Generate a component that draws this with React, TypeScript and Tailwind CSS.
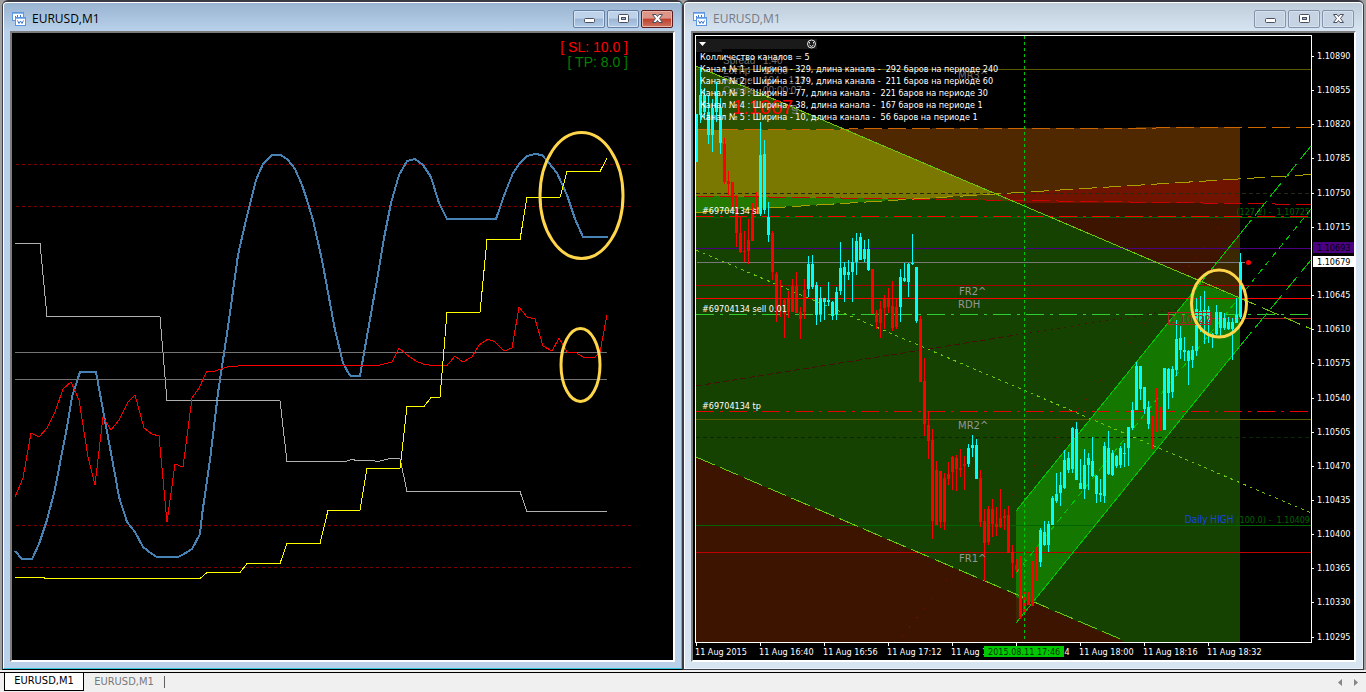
import { ReactElement, ReactNode } from 'react'
import clsx from 'clsx'

type Candle = [color: 'c' | 'r', high: number, top: number, bottom: number, low: number]

// One candle every 4px, starting at x = 696
const candles: Candle[] = [
  ['c', 114, 114, 162, 162], ['c', 68, 95, 115, 123], ['c', 88, 95, 112, 118], ['c', 95, 112, 135, 144],
  ['c', 99, 108, 135, 152], ['c', 82, 92, 112, 122], ['c', 98, 108, 143, 154], ['r', 138, 144, 182, 184],
  ['r', 171, 181, 184, 195], ['r', 182, 182, 202, 210], ['r', 195, 197, 233, 247], ['r', 216, 233, 252, 253],
  ['r', 231, 251, 252, 262], ['r', 219, 240, 251, 264], ['r', 203, 213, 241, 241], ['r', 192, 208, 214, 214],
  ['c', 122, 155, 214, 216], ['c', 140, 154, 210, 214], ['c', 202, 217, 235, 242], ['r', 231, 233, 272, 280],
  ['r', 272, 274, 309, 322], ['r', 280, 307, 311, 317], ['r', 299, 300, 314, 338], ['r', 291, 298, 312, 318],
  ['r', 279, 286, 312, 312], ['r', 272, 286, 313, 313], ['r', 307, 312, 319, 339], ['r', 279, 290, 312, 319],
  ['c', 256, 264, 289, 297], ['c', 255, 264, 287, 289], ['c', 282, 285, 315, 325], ['c', 287, 298, 314, 322],
  ['c', 298, 298, 302, 320], ['c', 282, 300, 302, 306], ['c', 301, 302, 316, 320], ['c', 287, 292, 314, 320],
  ['c', 242, 268, 291, 295], ['c', 262, 267, 275, 302], ['c', 260, 272, 275, 280], ['c', 238, 262, 272, 302],
  ['c', 233, 241, 262, 275], ['c', 233, 237, 260, 260], ['c', 240, 249, 259, 262], ['c', 239, 249, 270, 271],
  ['r', 269, 269, 314, 314], ['r', 310, 313, 322, 329], ['r', 301, 309, 323, 338], ['r', 295, 298, 308, 329],
  ['r', 288, 298, 307, 313], ['r', 281, 306, 328, 331], ['r', 298, 307, 327, 329], ['c', 269, 277, 307, 322],
  ['c', 263, 278, 281, 282], ['c', 263, 264, 282, 297], ['c', 234, 263, 264, 265], ['c', 267, 267, 321, 323],
  ['r', 316, 319, 382, 382], ['r', 358, 381, 424, 436], ['r', 411, 425, 441, 459], ['r', 429, 440, 521, 539],
  ['r', 461, 470, 525, 525], ['r', 471, 471, 522, 528], ['r', 473, 478, 522, 530], ['r', 462, 474, 479, 485],
  ['r', 456, 457, 472, 490], ['r', 455, 458, 469, 491], ['r', 449, 468, 470, 477], ['r', 456, 464, 466, 490],
  ['c', 444, 448, 464, 467], ['c', 435, 445, 448, 457], ['c', 439, 445, 479, 479], ['r', 470, 478, 522, 527],
  ['r', 509, 521, 543, 581], ['r', 506, 509, 542, 545], ['r', 499, 509, 524, 537], ['r', 507, 524, 527, 536],
  ['r', 489, 518, 527, 528], ['r', 509, 516, 518, 530], ['r', 506, 515, 553, 553], ['r', 545, 552, 563, 578],
  ['r', 559, 565, 570, 572], ['r', 556, 566, 617, 619], ['r', 592, 597, 613, 615], ['r', 592, 596, 605, 605],
  ['r', 561, 565, 606, 606], ['r', 547, 559, 565, 581], ['c', 528, 530, 562, 567], ['c', 521, 532, 545, 546],
  ['c', 521, 524, 545, 552], ['c', 496, 498, 525, 525], ['c', 473, 494, 501, 503], ['c', 472, 485, 493, 506],
  ['c', 450, 460, 488, 489], ['c', 452, 458, 470, 473], ['c', 427, 428, 469, 473], ['c', 422, 429, 480, 480],
  ['c', 459, 483, 489, 489], ['c', 449, 465, 489, 499], ['c', 453, 458, 465, 490], ['c', 437, 461, 476, 477],
  ['c', 475, 476, 494, 503], ['c', 479, 493, 495, 502], ['c', 442, 446, 496, 503], ['c', 431, 448, 474, 475],
  ['c', 450, 453, 475, 476], ['c', 455, 456, 466, 468], ['c', 446, 448, 465, 468], ['c', 443, 453, 454, 467],
  ['c', 427, 427, 448, 466], ['c', 402, 410, 428, 430], ['c', 362, 366, 410, 410], ['c', 366, 366, 389, 400],
  ['c', 387, 387, 409, 414], ['c', 401, 407, 424, 429], ['r', 416, 424, 433, 449], ['r', 388, 418, 432, 432],
  ['r', 407, 418, 430, 431], ['c', 368, 368, 430, 430], ['c', 368, 369, 393, 409], ['c', 366, 369, 392, 398],
  ['c', 320, 339, 370, 376], ['c', 326, 338, 350, 359], ['c', 337, 350, 352, 361], ['c', 350, 351, 361, 385],
  ['c', 346, 350, 360, 368], ['c', 298, 309, 351, 356], ['c', 296, 311, 322, 332], ['c', 291, 310, 316, 344],
  ['c', 306, 310, 320, 343], ['c', 333, 334, 336, 348], ['c', 305, 312, 334, 335], ['c', 312, 312, 328, 338],
  ['c', 313, 318, 328, 330], ['c', 317, 322, 329, 330], ['c', 318, 322, 329, 360], ['c', 298, 315, 323, 323],
  ['c', 253, 262, 317, 319],
]

const prices: [string, number][] = [
  ['1.10890', 56], ['1.10855', 90], ['1.10820', 124], ['1.10785', 158], ['1.10750', 193], ['1.10715', 227],
  ['1.10645', 295], ['1.10610', 329], ['1.10575', 363], ['1.10540', 398], ['1.10505', 432], ['1.10470', 466],
  ['1.10435', 500], ['1.10400', 534], ['1.10365', 568], ['1.10330', 602], ['1.10295', 637],
]

const dates = [
  '11 Aug 2015', '11 Aug 16:40', '11 Aug 16:56', '11 Aug 17:12', '11 Aug 17:28',
  '11 Aug 17:44', '11 Aug 18:00', '11 Aug 18:16', '11 Aug 18:32',
]

const channels = [
  'Колличество каналов = 5',
  'Канал № 1 : Ширина - 329, длина канала -  292 баров на периоде 240',
  'Канал № 2 : Ширина - 179, длина канала -  211 баров на периоде 60',
  'Канал № 3 : Ширина - 77, длина канала -  221 баров на периоде 30',
  'Канал № 4 : Ширина - 38, длина канала -  167 баров на периоде 1',
  'Канал № 5 : Ширина - 10, длина канала -  56 баров на периоде 1',
]

// y, color, dash pattern
const levels: [number, string, string?][] = [
  [69, '#5a5a00'],
  [193, '#282814', '4 3'],
  [216, '#ff0000', '18 6 3 6'],
  [217, '#006400'],
  [248, '#4b0082'],
  [285, '#aa0000'],
  [298, '#ff0000'],
  [314, '#32cd32', '18 6 3 6'],
  [411, '#e60000', '18 6 3 6'],
  [419, '#5a5a00'],
  [437, '#0a2800', '4 3'],
  [525, '#006400'],
  [552, '#be0000'],
]

const blueLine =
  '15,551 22,559 32,559 39,544 47,520 55,489 60,463 67,427 72,397 80,372 96,372 103,410 116,480 119,497 127,522 135,532 143,547 152,554 157,557 178,557 184,554 192,549 200,534 202,515 210,460 218,393 228,327 238,255 246,220 251,200 256,180 263,164 272,155 281,155 288,160 295,169 302,185 307,200 313,220 322,260 335,330 343,363 349,374 351,376 360,376 364,353 377,280 384,238 391,203 399,175 407,161 415,159 423,165 431,177 439,203 447,219 496,219 505,193 513,173 520,163 527,156 535,154 542,155 548,162 557,173 567,195 575,219 583,237 608,237'

const redLine =
  '15,497 23,478 31,433 39,437 47,428 55,412 63,389 71,382 79,400 88,457 95,485 103,417 111,430 119,420 128,402 135,395 144,428 152,434 159,436 167,522 175,464 183,467 192,398 199,388 207,371 215,371 227,367 243,365.5 378,365.5 392,362 399,348 407,355 416,361 423,364 432,365.5 447,365.5 455,356 463,362 472,357 479,345 488,339 495,342 504,351 512,348 519,307 527,317 535,319 543,346 552,351 559,338 567,352 576,352.5 583,357 595,357 600,352 607,315'

const yellowLine =
  '15,577.5 44,577.5 44,578.5 200,578.5 207,572.5 240,572.5 247,563.5 280,563.5 287,543.5 320,543.5 328,510.5 360,510.5 367,468.5 400,468.5 407,406.5 424,406.5 431,397.5 440,397.5 447,312.5 480,312.5 487,239.5 520,239.5 527,197.5 560,197.5 567,171.5 600,171.5 607,158'

const grayLine =
  '15,243.5 40,243.5 47,316.5 160,316.5 167,400.5 280,400.5 287,461.5 345,461.5 352,459.5 357,460.5 372,460.5 378,461.5 390,458.5 400,458.5 407,491.5 520,491.5 527,511.5 607,511.5'

const chartFont = "font-['DejaVu_Sans_Condensed','DejaVu_Sans',sans-serif]"

const ChartIcon = (): ReactElement => (
  <svg width="14" height="14" viewBox="0 0 14 14" shapeRendering="crispEdges" aria-hidden="true">
    <rect x="0.5" y="0.5" width="11" height="8" fill="#fff" stroke="#5c96e0" />
    <path d="M1 1.5H11" stroke="#8ab6ee" />
    <path d="M3.5 4V6M5.5 3V5M6.5 5V6M8.5 3V6" stroke="#3c78d0" />
    <rect x="3.5" y="5.5" width="10" height="8" fill="#fff" stroke="#5c96e0" />
    <path d="M4 6.5H13" stroke="#8ab6ee" />
    <path d="M5.5 8.5L7 11.5L8.5 9L10 11.5L11.5 8.5" fill="none" stroke="#3c78d0" shapeRendering="auto" />
  </svg>
)

const glyphs: Record<string, ReactNode> = {
  Minimize: <rect x="2.5" y="5.5" width="10" height="4" rx="1" />,
  Maximize: (
    <>
      <rect x="2.5" y="1.5" width="10" height="8" rx="1" />
      <rect x="5.5" y="4.5" width="4" height="2" fill="#9fb4cf" />
    </>
  ),
  Close: <path d="M2.5 1.5H6L7.5 3.5L9 1.5H12.5L9.5 5.5L12.5 9.5H9L7.5 7.5L6 9.5H2.5L5.5 5.5Z" />,
}

interface WindowProps {
  active?: boolean
  children: ReactNode
}

const ChartWindow = ({ active = false, children }: WindowProps): ReactElement => (
  <section
    className={clsx(
      'min-w-0 flex-1 rounded-t-md border border-t-2 border-[#3c3c46] border-t-[#3a3a44]',
      active ? 'bg-[#b9d1ea] border-b-black' : 'bg-[#d7e4f2]'
    )}
  >
    <div
      className={clsx(
        'rounded-t border-l border-t border-white border-r border-b px-1.5 pb-1.5',
        active
          ? 'border-r-[#35c5dc] border-b-[#35c5dc] bg-[linear-gradient(#99b4d1,#b9d1ea_28px)]'
          : 'border-r-[#e8f0f8] border-b-[#e8f0f8] bg-[linear-gradient(#bfcddb,#d7e4f2_28px)]'
      )}
    >
      <header className="flex h-7 items-center gap-1 pl-0.5 pr-0.5 pt-1">
        <ChartIcon />
        <h2
          className={clsx(
            "flex-1 pl-0.5 font-['Open_Sans','Noto_Sans',sans-serif] text-xs",
            active ? 'text-black' : 'text-[#747b84]'
          )}
        >
          EURUSD,M1
        </h2>
        <div className="flex gap-0.5">
          {['Minimize', 'Maximize', 'Close'].map((name) => (
            <button
              key={name}
              aria-label={name}
              className={clsx(
                'flex h-[18px] w-8 items-center justify-center rounded-xs border',
                active && name === 'Close' && 'border-[#5a1c20] bg-[linear-gradient(#dd9588_45%,#bd3f2c_50%,#cf7460)] shadow-[inset_0_0_0_1px_#e8b4a8]',
                active && name !== 'Close' && 'border-[#6580a3] bg-[linear-gradient(#bed2ea_45%,#9ab4d2_50%,#b4cce8)] shadow-[inset_0_0_0_1px_#d4e3f4]',
                !active && 'border-[#8493ab] bg-[#c6d3e2] shadow-[inset_0_0_0_1px_#d6e1ee]'
              )}
            >
              <svg width="14" height="12" viewBox="0 0 14 12" fill="#fff" stroke="#4a4f60" aria-hidden="true">
                {glyphs[name]}
              </svg>
            </button>
          ))}
        </div>
      </header>
      <div className="border-2 border-b-white border-l-[#7c7c7c] border-r-white border-t-[#7c7c7c] bg-black">{children}</div>
    </div>
  </section>
)

const IndicatorChart = (): ReactElement => (
  <svg viewBox="12 33 661 627" className="block h-auto w-full" role="img" aria-label="Indicator chart">
    <g className="font-['Liberation_Sans',Arial,sans-serif] text-[14px]" textAnchor="end">
      <text x="628" y="52" fill="#ff0000">[ SL: 10.0 ]</text>
      <text x="628" y="67" fill="#008000">[ TP: 8.0 ]</text>
    </g>
    <g fill="none" shapeRendering="crispEdges">
      {[164.5, 206.5, 525.5, 567.5].map((y) => (
        <path key={y} d={`M16 ${y}H631`} stroke="#800000" strokeDasharray="3 3" />
      ))}
      <polyline points={blueLine} stroke="#4682b4" strokeWidth="2" />
      <polyline points={grayLine} stroke="#b0b0b0" />
      <path d="M15 352.5H607M15 379.5H607" stroke="#737373" />
      <polyline points={redLine} stroke="#ff0000" />
      <polyline points={yellowLine} stroke="#ffff00" />
    </g>
    <g fill="none" stroke="#ffd54a" strokeWidth="3">
      <ellipse cx="581.5" cy="195.5" rx="41.5" ry="63" />
      <ellipse cx="580.5" cy="365" rx="19.5" ry="36.5" />
    </g>
  </svg>
)

const PriceChart = (): ReactElement => (
  <svg viewBox="693 33 661 627" className="block h-auto w-full" role="img" aria-label="EURUSD price chart">
    {/* Channel fills */}
    <g shapeRendering="crispEdges">
      <path d="M696 196L1240 203V642H696Z" fill="#3c1400" />
      <path d="M830 129L1240 127V179L1000 197H830Z" fill="#502800" />
      <path d="M997 194L1240 179V203L1018 203Z" fill="#701400" />
      <path d="M696 66L1240 298V642H1125L696 457Z" fill="#154200" />
      <path d="M696 66L845 129.5L696 130Z" fill="#285000" />
      <path d="M696 130L845 129.5L997 194L910 199L696 196Z" fill="#7a7800" />
      <path d="M910 199L997 194L1014 201Z" fill="#444400" />
      <path d="M696 196L910 199L696 212Z" fill="#247a00" />
      <path d="M1016 511L1240 234V346L1016 623Z" fill="#3c2800" />
      <path d="M1016 511L1200 283L1240 298V346L1032 603L1016 597Z" fill="#147800" />
    </g>

    <g fill="none" shapeRendering="crispEdges">
      {levels.map(([y, color, dash]) => (
        <path key={y} d={`M696 ${y + 0.5}H1311`} stroke={color} strokeDasharray={dash} />
      ))}
      <path d="M1210 318.5H1311" stroke="#b22222" />
      <path d="M697 262.5H1245" stroke="#787878" />
      <path d="M696 129.5L1311 127.5" stroke="#cd6600" strokeDasharray="18 6" />
      <path d="M696 196L1311 204.5" stroke="#cc0000" strokeDasharray="18 6" />
      <path d="M696 212.5L1311 174.5" stroke="#aaa000" strokeDasharray="18 6" />
      <path d="M696 66L1240 298" stroke="#6ec80a" />
      <path d="M1240 298L1311 329" stroke="#6ec80a" strokeDasharray="18 6" />
      <path d="M696 457L1125 641" stroke="#6ec80a" strokeDasharray="20 6" />
      <path d="M696 250L1311 513" stroke="#6ec80a" strokeDasharray="3 4" />
      <path d="M696 386L1016 335" stroke="#460f05" strokeDasharray="6 3" />
      <path d="M1016 335L1180 309" stroke="#460f05" strokeDasharray="2 5" />
      <path d="M902 637L1222 224" stroke="#780a00" strokeDasharray="1 11" />
      <path d="M1016 511L1240 234M1016 623L1240 346" stroke="#00c800" />
      <path d="M1240 234L1311 146M1240 346L1311 260" stroke="#00c800" strokeDasharray="18 6" />
      <path d="M1016 573L1311 209" stroke="#00c800" strokeDasharray="6 5" />
    </g>

    <g shapeRendering="crispEdges">
      {candles.map(([color, high, top, bottom, low], i) => (
        <g key={i} fill={color === 'c' ? '#00ffff' : '#ff0000'}>
          <rect x={696 + i * 4} y={high} width="1" height={Math.max(low - high, 1)} />
          <rect x={i === 0 ? 696 : 695 + i * 4} y={top} width={i === 0 ? 2 : 3} height={Math.max(bottom - top, 1)} />
        </g>
      ))}
      <path d="M1024.5 36V641" stroke="#00c800" strokeDasharray="3 3" />
    </g>
    <circle cx="1248.5" cy="262.5" r="2.5" fill="#ff0000" />

    {/* Level captions */}
    <g className="font-['DejaVu_Sans',sans-serif] text-[10px]" fill="#969696">
      <text x="958" y="79" fill="#6e6e6e">MR3^</text>
      <text x="959" y="295">FR2^</text>
      <text x="958" y="308">RDH</text>
      <text x="958" y="429">MR2^</text>
      <text x="959" y="562">FR1^</text>
    </g>
    <g className={clsx(chartFont, 'text-[9px]')} fill="#006400" textAnchor="end">
      <text x="1310" y="215" xmlSpace="preserve">(127.2) -  1.10725</text>
      <text x="1310" y="523" xmlSpace="preserve">
        <tspan fill="#1446e6" className="text-[10px]">Daily HIGH </tspan>(100.0) -  1.10409
      </text>
    </g>
    <rect x="1168.5" y="312.5" width="42" height="12" fill="none" stroke="#b22222" />
    <text x="1170" y="323" fill="#b22222" className={clsx(chartFont, 'text-[11px]')}>1.10622</text>

    <g className={clsx(chartFont, 'text-[9px]')} fill="#fff">
      <text x="702" y="214">#69704134 sl</text>
      <text x="702" y="312">#69704134 sell 0.01</text>
      <text x="702" y="409">#69704134 tp</text>
    </g>

    {/* Info panel */}
    <path d="M696 39H817V49H722V52H696Z" fill="#1a1a1a" />
    <path d="M699 42H706L702.5 46Z" fill="#fff" />
    <g fill="none" stroke="#e6e6e6">
      <circle cx="811.5" cy="44" r="4" />
      <path d="M809.5 45Q811.5 48 813.5 45M809.5 42V43.5M813.5 42V43.5" />
    </g>
    <g className="font-['Liberation_Sans',Arial,sans-serif] text-[10px]" fill="#6e6e6e">
      <text x="723" y="64">Spread</text>
      <text x="763" y="64">1.40</text>
      <text x="723" y="74">LotTip</text>
      <text x="763" y="74">10.00</text>
      <text x="723" y="84">Range</text>
      <text x="763" y="84">104 - 123</text>
      <text x="723" y="94">Candle</text>
      <text x="763" y="94">00:00:07</text>
      <text x="732" y="114" fill="#ff0000" className="text-[20px]">1.1067</text>
      <text x="791" y="114" fill="#787878" className="text-[13px]">9</text>
    </g>
    <g className={clsx(chartFont, 'text-[9px]')} fill="#fff">
      {channels.map((line, i) => (
        <text key={line} x="700" y={60 + i * 12} xmlSpace="preserve">{line}</text>
      ))}
    </g>

    {/* Axes */}
    <path d="M1312 35H1354V660H693V643H1312Z" fill="#000" />
    <path d="M695.5 642.5V35.5H1311.5V642.5Z" fill="none" stroke="#fff" shapeRendering="crispEdges" />
    <g className={clsx(chartFont, 'text-[9px]')} fill="#fff">
      {prices.map(([label, y]) => (
        <g key={label}>
          <path d={`M1311 ${y + 0.5}H1314`} stroke="#fff" />
          <text x="1317" y={y + 3}>{label}</text>
        </g>
      ))}
      {dates.map((label, i) => (
        <g key={label}>
          <path d={`M${696.5 + i * 64} 643V646`} stroke="#fff" />
          <text x={695 + i * 64} y="655">{label}</text>
        </g>
      ))}
      <rect x="1313" y="242" width="41" height="11" fill="#4b0082" />
      <text x="1317" y="251" fill="#000">1.10693</text>
      <rect x="1313" y="256" width="41" height="11" fill="#fff" />
      <text x="1317" y="265" fill="#000">1.10679</text>
      <rect x="984" y="646" width="80" height="11" fill="#00c800" />
      <text x="988" y="655" fill="#003200">2015.08.11 17:46</text>
    </g>
    <ellipse cx="1219" cy="303.5" rx="27.5" ry="33.5" fill="none" stroke="#ffd54a" strokeWidth="3" />
  </svg>
)

export default function App(): ReactElement {
  return (
    <div className="flex flex-col bg-[#f0f0f0]">
      <main className="flex bg-[#a0a0a0] px-0.5">
        <ChartWindow active>
          <IndicatorChart />
        </ChartWindow>
        <ChartWindow>
          <PriceChart />
        </ChartWindow>
      </main>
      <nav className={clsx(chartFont, 'mt-0.5 flex h-5 items-start border-t border-black pl-1 text-[11px]')}>
        <button className="h-[18px] w-20 border border-t-0 border-black bg-white text-black">EURUSD,M1</button>
        <button className="h-[18px] w-20 text-[#787878]">EURUSD,M1</button>
        <span className="mt-[3px] h-3 border-l border-[#606060]" />
        <div className="ml-auto flex gap-1 pr-1">
          <button aria-label="Scroll left" className="flex h-[18px] w-3 items-center justify-center">
            <svg width="4" height="7" viewBox="0 0 4 7" fill="#868686" aria-hidden="true"><path d="M4 0V7L0 3.5Z" /></svg>
          </button>
          <button aria-label="Scroll right" className="flex h-[18px] w-3 items-center justify-center">
            <svg width="4" height="7" viewBox="0 0 4 7" fill="#868686" aria-hidden="true"><path d="M0 0V7L4 3.5Z" /></svg>
          </button>
        </div>
      </nav>
    </div>
  )
}
